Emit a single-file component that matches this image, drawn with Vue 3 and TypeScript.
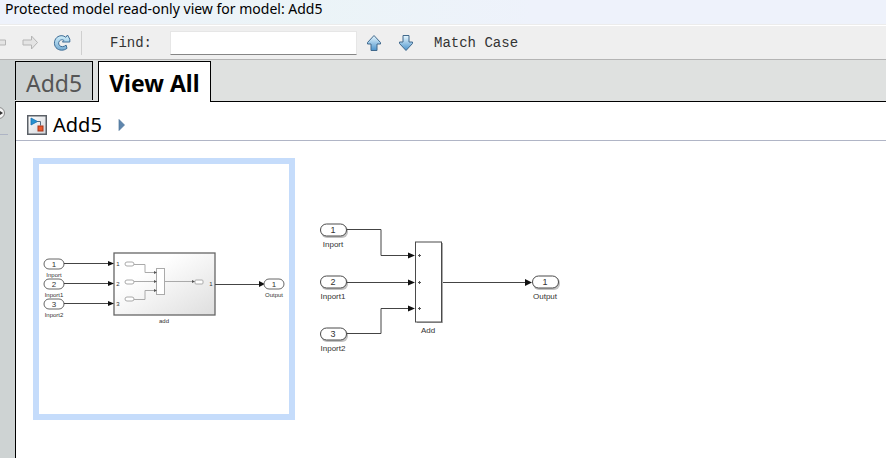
<script setup lang="ts">
import { ref } from 'vue'

interface Port { id: number; name: string; y: number }

const query = ref('')
const activeTab = ref('View All')
const tabs: string[] = ['Add5', 'View All']

const thumbPorts: Port[] = [
  { id: 1, name: 'Inport', y: 100 },
  { id: 2, name: 'Inport1', y: 120 },
  { id: 3, name: 'Inport2', y: 140 },
]
const ports: Port[] = [
  { id: 1, name: 'Inport', y: 72 },
  { id: 2, name: 'Inport1', y: 124 },
  { id: 3, name: 'Inport2', y: 176 },
]
</script>

<template>
  <div class="window">
    <header class="titlebar">Protected model read-only view for model: Add5</header>

    <div class="toolbar">
      <button class="tool back" type="button" aria-label="Back" disabled>
        <svg width="18" height="18" viewBox="0 0 18 18"><path d="M1.500 8.500 8 2v4h8.500v5H8v4z" fill="#e4e4e4" stroke="#b5b5b5" /></svg>
      </button>
      <button class="tool forward" type="button" aria-label="Forward" disabled>
        <svg width="18" height="18" viewBox="0 0 18 18"><path d="M16.500 8.500 10.500 2v4h-8.500v5h8.500v4z" fill="#e4e4e4" stroke="#b5b5b5" /></svg>
      </button>
      <button class="tool refresh" type="button" aria-label="Refresh">
        <svg width="18" height="18" viewBox="0 0 18 18">
          <defs>
            <linearGradient id="refreshFill" x1="0" y1="0" x2="0" y2="1"><stop offset="0" stop-color="#d4f1fc" /><stop offset="1" stop-color="#76acd3" /></linearGradient>
          </defs>
          <path d="M12.800 3.300C10.500 1.300 7.500 1.200 5 2.600 1 4.900.4 10.400 3 13.700c2.800 3.200 8 3.200 11 .6l-.9-3.200c-2.200 1.900-5 2.100-6.600.4-1.500-1.700-1.100-4.300 1.100-5.400 1.200-.6 2.400-.4 3.300.4L9.400 8h7.400V5.200L14.500 1z" fill="url(#refreshFill)" stroke="#3e6d96" stroke-linejoin="round" />
        </svg>
      </button>
      <span class="divider"></span>
      <label class="find-label" for="find">Find:</label>
      <input id="find" v-model="query" class="find" type="text" />
      <button class="tool up" type="button" aria-label="Find previous">
        <svg width="16" height="18" viewBox="0 0 16 18">
          <defs>
            <linearGradient id="arrowFill" x1="0" y1="0" x2="0" y2="1"><stop offset="0" stop-color="#e8f8ff" /><stop offset="1" stop-color="#4a93cc" /></linearGradient>
          </defs>
          <path d="M8 1.500 14.500 8.500v1.500H11v6.500H5V10H1.500V8.500z" fill="url(#arrowFill)" stroke="#41698c" stroke-linejoin="round" />
        </svg>
      </button>
      <button class="tool down" type="button" aria-label="Find next">
        <svg width="16" height="18" viewBox="0 0 16 18"><path d="M8 16.500 14.500 9.500V8H11V1.500H5V8H1.500v1.500z" fill="url(#arrowFill)" stroke="#41698c" stroke-linejoin="round" /></svg>
      </button>
      <button class="match" type="button">Match Case</button>
    </div>

    <div class="body">
      <aside class="rail">
        <svg class="rail-icon" width="6" height="14" viewBox="0 0 6 14">
          <circle cx="-1" cy="7" r="5.500" fill="#f4f4f4" stroke="#888" />
          <path d="M-2 5h2l3 2-3 2h-2z" fill="#333" />
        </svg>
        <span class="rail-line"></span>
      </aside>

      <main class="content">
        <nav class="tabs" role="tablist">
          <button
            v-for="tab in tabs"
            :key="tab"
            type="button"
            role="tab"
            :aria-selected="tab === activeTab"
            :class="['tab', { active: tab === activeTab }]"
            @click="activeTab = tab"
          >{{ tab }}</button>
        </nav>

        <div class="crumbs">
          <svg width="20" height="20" viewBox="0 0 20 20">
            <defs>
              <linearGradient id="modelFill" x1="0" y1="0" x2="1" y2="1"><stop offset="0" stop-color="#fff" /><stop offset="1" stop-color="#d2d5da" /></linearGradient>
            </defs>
            <rect x=".75" y=".75" width="18.500" height="18.500" fill="url(#modelFill)" stroke="#5b6067" stroke-width="1.500" />
            <path d="M10 6.500h3.500v4" fill="none" stroke="#596c80" />
            <path d="M4 3 10.500 6.500 4 10z" fill="#2592d0" stroke="#1a6fae" stroke-width=".8" />
            <rect x="11" y="11" width="5" height="5" fill="#e9592b" stroke="#a93518" />
          </svg>
          <a class="crumb" href="#">Add5</a>
          <svg class="chevron" width="8" height="12" viewBox="0 0 8 12"><path d="M1 .5 6.500 6 1 11.500z" fill="#5f86ad" stroke="#4c7299" stroke-width=".7" /></svg>
        </div>

        <section class="canvas">
          <button class="thumb" type="button" aria-label="Add5 overview">
            <svg width="250" height="250" viewBox="0 0 250 250">
              <defs>
                <linearGradient id="blockFill" x1="0" y1="0" x2="1" y2="1"><stop offset=".3" stop-color="#fff" /><stop offset="1" stop-color="#dedede" /></linearGradient>
              </defs>
              <rect x="75" y="89" width="101" height="62" fill="url(#blockFill)" stroke="#666" stroke-width="1.300" />
              <g v-for="p in thumbPorts" :key="p.id">
                <rect x="5" :y="p.y - 5" width="20" height="10" rx="5" fill="#fff" stroke="#666" />
                <text x="15" :y="p.y + 3" class="num">{{ p.id }}</text>
                <text x="15" :y="p.y + 13" class="small">{{ p.name }}</text>
                <path :d="`M25 ${p.y - .5}H70`" class="wire" />
                <path :d="`M69 ${p.y - 3}l6 2.500-6 2.500z`" fill="#111" />
                <text x="79" :y="p.y + 2" class="small">{{ p.id }}</text>
              </g>
              <g class="inner">
                <rect x="86" y="98" width="9" height="4" rx="2" />
                <rect x="86" y="116" width="9" height="4" rx="2" />
                <rect x="86" y="133" width="9" height="4" rx="2" />
                <path d="M95 100.500h11v8h11M95 117.500h22M95 135.500h11v-9h11M126 117.500h28" />
                <rect x="117.500" y="104.500" width="8" height="26" />
                <rect x="156" y="116" width="8" height="4" rx="1" />
              </g>
              <path d="M115 107l3 1.500-3 1.500zM115 116l3 1.500-3 1.500zM115 125l3 1.500-3 1.500zM153 116l3 1.500-3 1.500z" fill="#555" />
              <text x="172" y="122" class="small">1</text>
              <path d="M176 120.500h45" class="wire" />
              <path d="M220 117l6 3-6 3z" fill="#111" />
              <rect x="225" y="115" width="20" height="10" rx="5" fill="#fff" stroke="#666" />
              <text x="235" y="123" class="num">1</text>
              <text x="235" y="133" class="small">Output</text>
              <text x="125" y="159" class="small">add</text>
            </svg>
          </button>

          <svg class="diagram" width="300" height="262" viewBox="0 0 300 262">
            <g v-for="p in ports" :key="p.id">
              <rect x="26" :y="p.y - 5" width="27" height="13" rx="6" fill="#777" opacity=".45" />
              <rect x="25.500" :y="p.y - 6" width="26" height="12" rx="6" fill="#fff" stroke="#4a4a4a" />
              <text x="38" :y="p.y + 3" class="num-large">{{ p.id }}</text>
              <text x="38" :y="p.y + 17" class="label">{{ p.name }}</text>
            </g>
            <path d="M52 71.500h34v26h29M52 124.500h63M52 175.500h34v-25h29M147 124.500h85" class="wire" />
            <rect x="122" y="85" width="26" height="80" fill="#aaa" />
            <rect x="120.500" y="84" width="26" height="80" fill="#fff" stroke="#4a4a4a" />
            <path d="M113 94.500l7 3-7 3zM113 121.500l7 3-7 3zM113 147.500l7 3-7 3zM230 121l7 3.500-7 3.500z" fill="#111" />
            <path d="M123 97.500h3m-1.500-1.500v3M123 124.500h3m-1.500-1.500v3M123 150.500h3m-1.500-1.500v3" fill="none" stroke="#555" />
            <text x="133" y="175" class="label">Add</text>
            <rect x="238" y="119" width="27" height="13" rx="6" fill="#777" opacity=".45" />
            <rect x="237.500" y="118" width="26" height="12" rx="6" fill="#fff" stroke="#4a4a4a" />
            <text x="250" y="127" class="num-large">1</text>
            <text x="250" y="141" class="label">Output</text>
          </svg>
        </section>
      </main>
    </div>
  </div>
</template>

<style>
body {
  margin: 0;
}
</style>

<style scoped>
.window {
  display: flex;
  flex-direction: column;
  min-height: 100vh;
  overflow: hidden;
  background: #fff;
  color: #000;
  font-family: "Noto Sans", "Open Sans", sans-serif;
}
button {
  padding: 0;
  border: 0;
  background: none;
  color: inherit;
  font: inherit;
}
svg {
  display: block;
  flex: none;
}
.titlebar {
  box-sizing: border-box;
  height: 25px;
  padding: 0 5px;
  background: linear-gradient(90deg, #eef2fb, #ebf4f7 35%, #eef2fb 60%);
  border-bottom: 1px solid #ececec;
  font-size: 14px;
  line-height: 18px;
  white-space: nowrap;
}
.toolbar {
  display: flex;
  align-items: center;
  box-sizing: border-box;
  height: 35px;
  background: #efefef;
  border-top: 1px solid #fff;
  border-bottom: 1px solid #b4b4b4;
  font-family: "Liberation Mono", monospace;
  font-size: 14px;
  color: #333;
}
.back {
  margin-left: -11px;
}
.forward {
  margin-left: 14px;
}
.refresh {
  margin-left: 14px;
}
.divider {
  width: 1px;
  height: 24px;
  margin-left: 10px;
  background: #cfcfcf;
}
.find-label {
  margin-left: 28px;
}
.find {
  box-sizing: border-box;
  width: 187px;
  height: 24px;
  margin-left: 18px;
  padding: 0 4px;
  border: 1px solid #e6e6e6;
  border-bottom-color: #868686;
  background: #fff;
  font: inherit;
}
.up {
  margin-left: 9px;
}
.down {
  margin-left: 16px;
}
.match {
  margin-left: 20px;
}
.body {
  display: flex;
  flex: 1;
}
.rail {
  width: 15px;
  background: #ced3d3;
}
.rail-icon {
  margin-top: 46px;
}
.rail-line {
  display: block;
  width: 8px;
  height: 1px;
  margin-top: 14px;
  background: #aeb4c4;
}
.content {
  flex: 1;
  min-width: 0;
  border-left: 1px solid #000;
}
.tabs {
  display: flex;
  gap: 5px;
  box-sizing: border-box;
  height: 42px;
  margin-left: -1px;
  padding-top: 1px;
  background: #dfe1e0;
  border-bottom: 1px solid #000;
}
.tab {
  box-sizing: border-box;
  height: 39px;
  padding: 0 10px;
  border: 1px solid #000;
  border-bottom: 0;
  background: #ced3d3;
  color: #555;
  font-size: 23px;
  line-height: 42px;
  white-space: nowrap;
}
.tab.active {
  height: 41px;
  background: #fff;
  color: #000;
  font-weight: 700;
}
.crumbs {
  display: flex;
  align-items: center;
  box-sizing: border-box;
  height: 39px;
  padding: 8px 11px 0;
  border-bottom: 1px solid #b0b5c6;
}
.crumb {
  margin-left: 6px;
  color: #000;
  font-size: 20px;
  line-height: 28px;
  text-decoration: none;
}
.chevron {
  margin-left: 16px;
}
.canvas {
  display: flex;
  padding: 17px 0 0 17px;
}
.thumb {
  flex: none;
  border: 6px solid #c5dcfb;
}
.wire {
  fill: none;
  stroke: #444;
}
.inner {
  fill: #fff;
  stroke: #aaa;
}
.inner path {
  fill: none;
}
text {
  font-family: "Liberation Sans", sans-serif;
  fill: #333;
  text-anchor: middle;
}
.num,
.label {
  font-size: 8px;
}
.num-large {
  font-size: 9px;
}
.small {
  font-size: 6px;
}
</style>
